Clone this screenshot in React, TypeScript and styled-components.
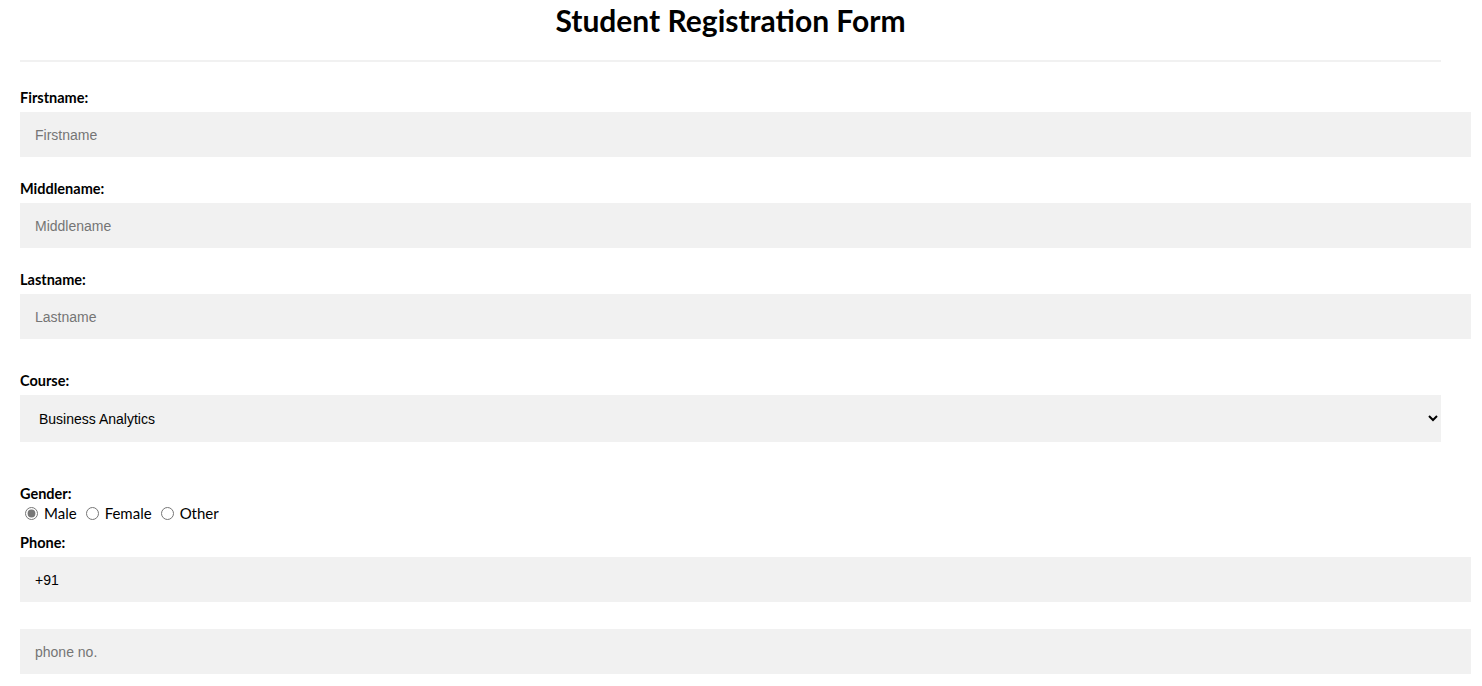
import React, { useState } from 'react'
import styled, { createGlobalStyle } from 'styled-components'

const GlobalStyle = createGlobalStyle`
    body {
        margin: 0;
        background: #fff;
        font-family: 'Lato', 'Liberation Sans', sans-serif;
        color: #000;
    }
`

const courses = ['Business Analytics', 'Data Science', 'Computer Science', 'Cyber Security']

const App = () => {
    const [gender, setGender] = useState('male')

    return (
        <>
            <GlobalStyle />
            <Form_>
                <Title_>Student Registration Form</Title_>
                <Rule_ />

                <Field_ $top={27}>
                    <Label_ htmlFor="fn">Firstname:</Label_>
                    <Input_ id="fn" placeholder="Firstname" />
                </Field_>
                <Field_ $top={23}>
                    <Label_ htmlFor="mn">Middlename:</Label_>
                    <Input_ id="mn" placeholder="Middlename" />
                </Field_>
                <Field_ $top={23}>
                    <Label_ htmlFor="ln">Lastname:</Label_>
                    <Input_ id="ln" placeholder="Lastname" />
                </Field_>
                <Field_ $top={33}>
                    <Label_ htmlFor="course">Course:</Label_>
                    <Select_ id="course" defaultValue={courses[0]}>
                        {courses.map(c => (
                            <option key={c}>{c}</option>
                        ))}
                    </Select_>
                </Field_>
                <Field_ $top={43}>
                    <Label_ as="div">Gender:</Label_>
                    <Radios_>
                        {['Male', 'Female', 'Other'].map(g => (
                            <RadioLabel_ key={g}>
                                <Radio_
                                    type="radio"
                                    name="gender"
                                    checked={gender === g.toLowerCase()}
                                    onChange={() => setGender(g.toLowerCase())}
                                />
                                {g}
                            </RadioLabel_>
                        ))}
                    </Radios_>
                </Field_>
                <Field_ $top={12}>
                    <Label_ htmlFor="cc">Phone:</Label_>
                    <Input_ id="cc" defaultValue="+91" />
                    <Input_ $top={27} placeholder="phone no." />
                </Field_>
            </Form_>
        </>
    )
}

const Form_ = styled.form`
    padding: 0 41px 40px 20px;
`

const Title_ = styled.h1`
    margin: 0;
    padding-top: 1px;
    text-align: center;
    font-size: 30px;
    line-height: 38px;
    font-weight: 700;
`

const Rule_ = styled.hr`
    margin: 21px 0 0;
    border: none;
    height: 2px;
    background: #f1f1f1;
`

const Field_ = styled.div<{ $top: number }>`
    margin-top: ${p => p.$top}px;
    display: flex;
    flex-direction: column;
`

const Label_ = styled.label`
    display: block;
    font-size: 14.5px;
    font-weight: 700;
    line-height: 18px;
    margin-bottom: 5px;
`

const Input_ = styled.input<{ $top?: number }>`
    box-sizing: content-box;
    width: 100%;
    height: 15px;
    padding: 15px;
    margin: ${p => p.$top ?? 0}px 0 0;
    border: none;
    outline: none;
    background: #f1f1f1;
    font-family: 'Liberation Sans', Arial, sans-serif;
    font-size: 14px;
    color: #000;
    &::placeholder {
        color: #757575;
    }
`

const Select_ = styled.select`
    box-sizing: border-box;
    width: 100%;
    height: 47px;
    padding: 0 14px 0 15px;
    border: none;
    outline: none;
    background: #f1f1f1;
    font-family: 'Liberation Sans', Arial, sans-serif;
    font-size: 14px;
    color: #000;
`

const Radios_ = styled.div`
    display: flex;
    align-items: center;
    margin-top: -4px;
    height: 18px;
`

const RadioLabel_ = styled.label`
    display: flex;
    align-items: center;
    font-size: 15px;
    margin-right: 4px;
`

const Radio_ = styled.input`
    margin: 0 6px 0 5px;
    width: 13px;
    height: 13px;
    accent-color: #767676;
`

export default App
